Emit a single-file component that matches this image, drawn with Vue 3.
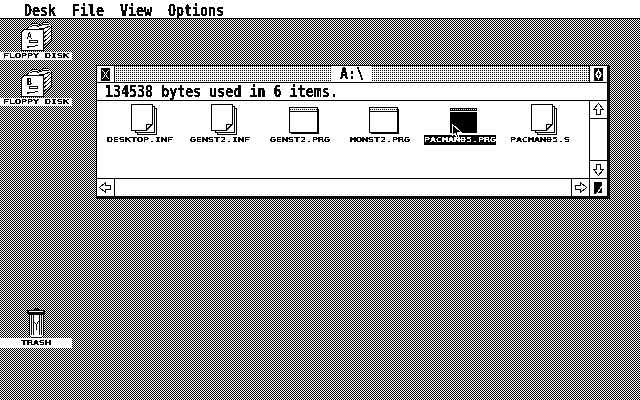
<script setup>
const files = [
  { name: 'DESKTOP.INF', type: 'doc' },
  { name: 'GENST2.INF', type: 'doc' },
  { name: 'GENST2.PRG', type: 'prg' },
  { name: 'MONST2.PRG', type: 'prg' },
  { name: 'PACMAN05.PRG', type: 'sel' },
  { name: 'PACMAN05.S', type: 'doc' }
]
const menus = ['Desk', 'File', 'View', 'Options']
const disks = [
  { letter: 'A', cls: 'disk-a' },
  { letter: 'B', cls: 'disk-b' }
]
</script>

<template>
  <div class="screen">
    <svg class="defs" width="0" height="0" aria-hidden="true">
      <filter id="onebit" x="0" y="0" width="100%" height="100%" color-interpolation-filters="sRGB">
        <feComponentTransfer>
          <feFuncR type="discrete" tableValues="0 0 1" />
          <feFuncG type="discrete" tableValues="0 0 1" />
          <feFuncB type="discrete" tableValues="0 0 1" />
        </feComponentTransfer>
      </filter>
    </svg>

    <header class="menubar">
      <span v-for="m in menus" :key="m" class="menu"><span class="sys">{{ m }}</span></span>
    </header>

    <main class="desktop">
      <div v-for="d in disks" :key="d.letter" class="desk-item" :class="d.cls">
        <svg class="floppy" width="32" height="32" viewBox="0 0 32 32" shape-rendering="crispEdges">
          <path d="M7 9 L10 5 L14 3 L18 4 L20 5 L24 2 L28 2 L31 5 V21 L23 30 V9 Z" fill="#fff" stroke="#000" />
          <path d="M10 7 L14 5 L18 6 M17 7 L24 4 L29 4 M19 8 H25 L30 6" fill="none" stroke="#000" />
          <path d="M23.5 14 L31 7 M23.5 18 L31 11 M23.5 22 L31 15 M23.5 26 L31 19 M23.5 29 L31 22" stroke="#000" fill="none" />
          <path d="M1.5 12.5 L4.5 9.5 H23.5 V30.5 H1.5 Z" fill="#fff" stroke="#000" />
          <text x="7" y="19" class="disk-letter">{{ d.letter }}</text>
          <path d="M9.5 20.5 H17.5 V22.5 H9.5 Z M7 26.5 H15 M15 25 L18 25 M7 27 H9" fill="none" stroke="#000" />
        </svg>
        <div class="cap-band"><span class="cap">FLOPPY DISK</span></div>
      </div>

      <div class="desk-item trash">
        <svg width="18" height="30" viewBox="0 0 18 30" shape-rendering="crispEdges">
          <path d="M5 2 L7 0 H11 L13 2 H18 V6 H0 V2 Z" fill="#000" />
          <path d="M2 3 H16 V4 H2 Z" fill="#fff" />
          <path d="M2.5 6 V27.5 L4.5 29.5 H14.5 L16.5 27.5 V6 Z" fill="#fff" stroke="#000" />
          <path d="M4.5 7 V27 M6.5 7 V27 M12.5 7 V27 M14.5 7 V27" stroke="#000" />
          <path d="M7.5 14 L9.5 17 L11.5 13 M9.5 17 V22" stroke="#000" fill="none" />
        </svg>
        <div class="cap-band trash-band"><span class="cap">TRASH</span></div>
      </div>

      <section class="window">
        <div class="title-row">
          <div class="box left-box">
            <svg width="11" height="13" viewBox="0 0 11 13" shape-rendering="crispEdges">
              <rect x="1" y="0" width="9" height="13" fill="#000" />
              <path d="M2.5 2 L8.5 11 M8.5 2 L2.5 11" stroke="#fff" />
            </svg>
          </div>
          <div class="title-bar">
            <span class="title-text"><span class="sys">A:\</span></span>
          </div>
          <div class="box right-box">
            <svg width="11" height="13" viewBox="0 0 11 13" shape-rendering="crispEdges">
              <rect x="1" y="0" width="9" height="13" fill="#000" />
              <path d="M5.5 1 L9 6.5 L5.5 12 L2 6.5 Z" fill="#fff" />
              <path d="M5.5 4 L7 6.5 L5.5 9 L4 6.5 Z" fill="#000" />
            </svg>
          </div>
        </div>

        <div class="info-row"><span class="sys">134538 bytes used in 6 items.</span></div>

        <div class="middle">
          <div class="files">
            <div v-for="f in files" :key="f.name" class="file">
              <div class="icon" :class="'icon-' + f.type">
                <svg v-if="f.type === 'doc'" width="27" height="32" viewBox="0 0 27 32" shape-rendering="crispEdges">
                  <path d="M23.5 4.5 H25.5 V30.5 H6.5 V28.5" fill="none" stroke="#000" />
                  <path d="M21.5 2.5 H23.5 V28.5 H4.5 V26.5" fill="none" stroke="#000" />
                  <path d="M.5 .5 H21.5 V20 L15 26.5 H.5 Z" fill="#fff" stroke="#000" />
                  <path d="M21 20.5 H15.5 V26" fill="none" stroke="#000" />
                  <path d="M21.5 20 L15 26.5" stroke="#000" />
                </svg>
                <svg v-else-if="f.type === 'prg'" width="30" height="27" viewBox="0 0 30 27" shape-rendering="crispEdges">
                  <rect x="2" y="2" width="28" height="25" fill="#000" />
                  <rect x=".5" y=".5" width="28" height="25" fill="#fff" stroke="#000" />
                  <path d="M1 4.5 H28" stroke="#000" />
                  <path d="M1 2.5 H28" stroke="#000" stroke-dasharray="1 1" />
                </svg>
                <svg v-else width="28" height="26" viewBox="0 0 28 26" shape-rendering="crispEdges">
                  <rect x="0" y="0" width="27" height="3" fill="#000" />
                  <path d="M1 1.5 H26" stroke="#fff" stroke-dasharray="1 1" />
                  <rect x="0" y="4" width="27" height="21" fill="#000" />
                </svg>
              </div>
              <span class="file-label" :class="{ selected: f.type === 'sel' }"><span class="cap">{{ f.name }}</span></span>
            </div>
          </div>
          <div class="vscroll">
            <div class="vbtn">
              <svg width="11" height="13" viewBox="0 0 11 13" shape-rendering="crispEdges">
                <path d="M5.5 .5 L10.5 6.5 H7.5 V11.5 H3.5 V6.5 H.5 Z" fill="#fff" stroke="#000" />
              </svg>
            </div>
            <div class="vbtn down">
              <svg width="11" height="13" viewBox="0 0 11 13" shape-rendering="crispEdges">
                <path d="M5.5 12.5 L10.5 6.5 H7.5 V1.5 H3.5 V6.5 H.5 Z" fill="#fff" stroke="#000" />
              </svg>
            </div>
          </div>
        </div>

        <div class="bottom-row">
          <div class="box left-box">
            <svg width="13" height="11" viewBox="0 0 13 11" shape-rendering="crispEdges">
              <path d="M.5 5.5 L6.5 .5 V3.5 H11.5 V7.5 H6.5 V10.5 Z" fill="#fff" stroke="#000" />
            </svg>
          </div>
          <div class="track"></div>
          <div class="box arrow-r">
            <svg width="13" height="11" viewBox="0 0 13 11" shape-rendering="crispEdges">
              <path d="M12.5 5.5 L6.5 .5 V3.5 H1.5 V7.5 H6.5 V10.5 Z" fill="#fff" stroke="#000" />
            </svg>
          </div>
          <div class="box size-box">
            <svg width="9" height="12" viewBox="0 0 9 12">
              <path d="M0 0 H8 V3 L2 12 H0 Z M8 5 V11 H4 Z" fill="#000" />
            </svg>
          </div>
        </div>
      </section>

      <svg class="cursor" width="12" height="16" viewBox="0 0 12 16" shape-rendering="crispEdges">
        <path d="M1 1 V13 L4 10 L6 15 L8 14 L6 9 H10 Z" fill="#000" stroke="#fff" />
      </svg>
    </main>
  </div>
</template>

<style>
html, body { margin: 0; background: #fff; }
</style>

<style scoped>
.screen {
  position: relative;
  width: 640px;
  height: 400px;
  overflow: hidden;
  background: #fff;
  color: #000;
  filter: url(#onebit);
  display: flex;
  flex-direction: column;
  font-family: "DejaVu Sans Mono", monospace;
}
.defs { position: absolute; }
.sys {
  display: inline-block;
  font-family: "DejaVu Sans Mono", monospace;
  font-weight: 700;
  font-size: 13.33px;
  line-height: 16px;
  transform: scaleY(1.22);
  transform-origin: center;
  white-space: pre;
}
.cap {
  display: inline-block;
  font-family: "DejaVu Sans Mono", monospace;
  font-size: 10px;
  line-height: 8px;
  transform: scale(1, .78);
  white-space: pre;
  -webkit-text-stroke: .12px currentColor;
}
.menubar {
  height: 18px;
  flex: none;
  display: flex;
  padding-left: 24px;
  border-bottom: 1px solid #000;
  background: #fff;
  box-sizing: content-box;
  align-items: center;
}
.menu { width: 48px; }
.menu:last-child { width: auto; }
.desktop {
  position: relative;
  flex: 1;
  background: repeating-conic-gradient(#000 0 25%, #fff 0 50%) 0 0 / 2px 2px;
}
.desk-item {
  position: absolute;
  left: 0;
  width: 72px;
  display: flex;
  flex-direction: column;
}
.disk-a { top: 1px; }
.disk-b { top: 47px; }
.trash { top: 289px; align-items: stretch; }
.trash svg { margin-left: 27px; }
.floppy { margin-left: 20px; }
.disk-letter { font-family: "DejaVu Sans Mono", monospace; font-size: 8px; fill: #000; }
.cap-band {
  height: 8px;
  background: #fff;
  display: flex;
  align-items: center;
  justify-content: center;
}
.trash-band { height: 10px; }
.window {
  position: absolute;
  left: 96px;
  top: 46px;
  width: 510px;
  height: 130px;
  background: #fff;
  border-style: solid;
  border-color: #000;
  border-width: 1px 3px 3px 1px;
  display: flex;
  flex-direction: column;
}
.title-row { height: 16px; flex: none; display: flex; border-bottom: 1px solid #000; }
.box { display: flex; align-items: center; justify-content: center; flex: none; background: #fff; }
.left-box { width: 17px; border-right: 1px solid #000; }
.right-box { width: 17px; border-left: 1px solid #000; }
.title-bar {
  flex: 1;
  display: flex;
  justify-content: center;
  align-items: center;
  background: repeating-conic-gradient(#000 0 25%, #fff 0 100%) 0 0 / 2px 2px;
}
.title-text { background: #fff; padding: 0 8px; height: 16px; display: flex; align-items: center; }
.info-row {
  height: 17px;
  flex: none;
  border-bottom: 1px solid #000;
  padding-left: 8px;
  display: flex;
  align-items: center;
}
.middle { flex: 1; display: flex; min-height: 0; border-bottom: 1px solid #000; }
.files {
  flex: 1;
  display: grid;
  grid-template-columns: repeat(6, 80px);
  align-content: start;
  padding: 3px 0 0 3px;
}
.file { display: flex; flex-direction: column; align-items: center; }
.icon { height: 31px; width: 80px; box-sizing: border-box; display: flex; align-items: flex-start; }
.icon-doc { padding-left: 31px; }
.icon-prg { padding-left: 29px; padding-top: 3px; }
.icon-sel { padding-left: 30px; padding-top: 4px; }
.file-label {
  height: 10px;
  display: flex;
  align-items: center;
  padding: 0;
  background: #fff;
}
.file-label.selected { filter: url(#onebit) invert(1); }
.vscroll {
  width: 17px;
  flex: none;
  border-left: 1px solid #000;
  display: flex;
  flex-direction: column;
  justify-content: space-between;
}
.vbtn {
  height: 17px;
  display: flex;
  align-items: center;
  justify-content: center;
  border-bottom: 1px solid #000;
}
.vbtn.down { border-bottom: 0; border-top: 1px solid #000; }
.bottom-row { height: 17px; flex: none; display: flex; }
.track { flex: 1; }
.arrow-r { width: 17px; border-left: 1px solid #000; }
.size-box { width: 17px; border-left: 1px solid #000; }
.cursor { position: absolute; left: 451px; top: 104px; }
</style>
